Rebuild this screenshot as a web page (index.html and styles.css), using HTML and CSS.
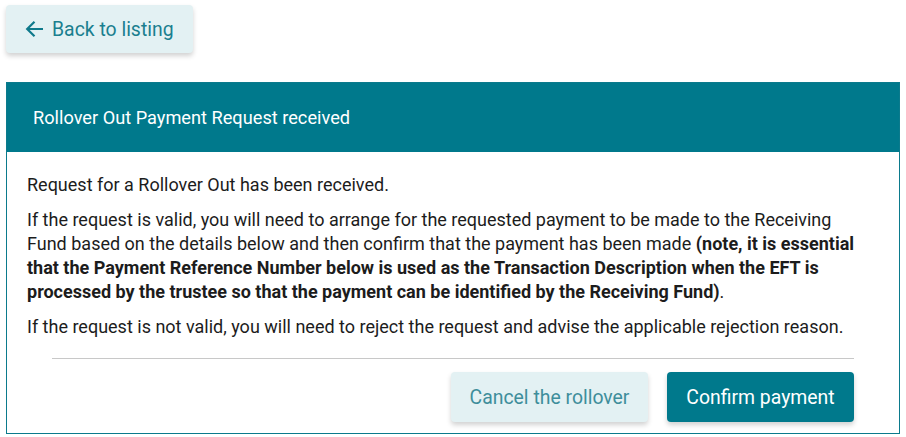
FILE: index.html
```html
<!DOCTYPE html>
<html>
<head>
<meta charset="utf-8">
<link rel="stylesheet" href="styles.css">
</head>
<body>
<div class="page">
  <div class="top">
    <button class="back-btn">
      <svg class="back-icon" width="19" height="18" viewBox="0 0 19 18"><path d="M18 9H2.5M9.5 1.8L2.2 9 9.5 16.2" fill="none" stroke="currentColor" stroke-width="2.2"/></svg>
      <span>Back to listing</span>
    </button>
  </div>
  <div class="card">
    <div class="card-header">Rollover Out Payment Request received</div>
    <div class="card-body">
      <div class="text">
        <p>Request for a Rollover Out has been received.</p>
        <p>If the request is valid, you will need to arrange for the requested payment to be made to the Receiving Fund based on the details below and then confirm that the payment has been made <strong>(note, it is essential that the Payment Reference Number below is used as the Transaction Description when the EFT is processed by the trustee so that the payment can be identified by the Receiving Fund)</strong>.</p>
        <p>If the request is not valid, you will need to reject the request and advise the applicable rejection reason.</p>
      </div>
      <hr class="divider">
      <div class="actions">
        <button class="btn btn-light">Cancel the rollover</button>
        <button class="btn btn-primary">Confirm payment</button>
      </div>
    </div>
  </div>
</div>
</body>
</html>
```
FILE: styles.css
```css
html, body {
  margin: 0;
  padding: 0;
  background: #ffffff;
}
body {
  font-family: Roboto, "Liberation Sans", sans-serif;
  color: #1c1c1c;
}
.page {
  padding: 5px 6px 0 6px;
}
.top {
  display: flex;
  margin-bottom: 29px;
}
.back-btn {
  display: flex;
  align-items: center;
  gap: 8px;
  height: 48px;
  width: 187px;
  padding: 0 0 0 19px;
  border: none;
  border-radius: 4px;
  background: #e3f1f3;
  color: #1a7f8f;
  font-family: inherit;
  font-size: 19.4px;
  box-shadow: 0 3px 5px rgba(0,0,0,0.18);
  cursor: pointer;
}
.back-icon {
  color: #0f7a8b;
  flex: none;
}
.card {
  width: 894px;
  box-sizing: border-box;
  border: 1px solid #0b7a8c;
}
.card-header {
  background: #00798c;
  color: #ffffff;
  height: 69px;
  display: flex;
  align-items: center;
  padding-left: 26px;
  font-size: 18.2px;
}
.card-body {
  padding: 21px 20px 11px 20px;
}
.text {
  display: flex;
  flex-direction: column;
  gap: 11px;
  padding-right: 14px;
}
.text p {
  margin: 0;
  font-size: 18px;
  line-height: 24px;
}
.divider {
  border: none;
  border-top: 1px solid #c8c8c8;
  margin: 19px 25px 13px 25px;
}
.actions {
  display: flex;
  justify-content: flex-end;
  gap: 19px;
  padding-right: 25px;
}
.btn {
  height: 50px;
  border: none;
  border-radius: 4px;
  font-family: inherit;
  font-size: 19.4px;
  cursor: pointer;
  box-shadow: 0 3px 5px rgba(0,0,0,0.18);
}
.btn-light {
  width: 197px;
  background: #e3f1f3;
  color: #3e8e9b;
}
.btn-primary {
  width: 187px;
  background: #00798c;
  color: #ffffff;
}
```
